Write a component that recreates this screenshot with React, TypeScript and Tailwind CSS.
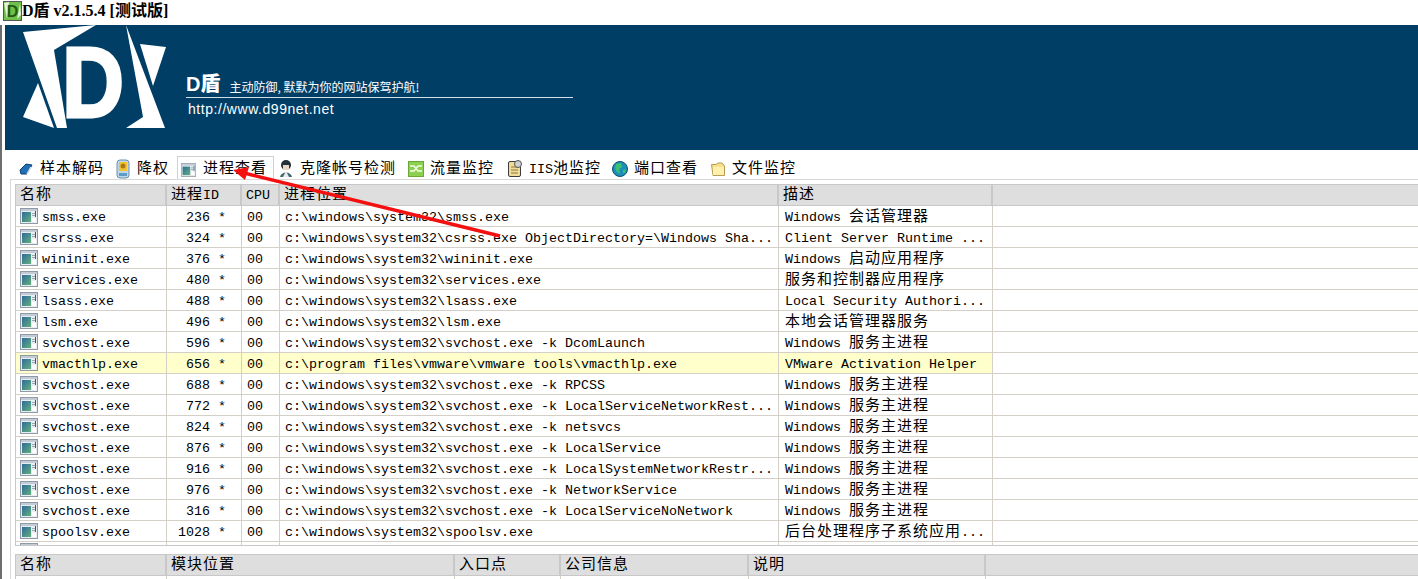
import type { ReactNode } from "react";

type Proc = { name: string; pid: string; path: string; desc: string; hl?: boolean };

const procs: Proc[] = [
  { name: "smss.exe", pid: "236", path: "c:\\windows\\system32\\smss.exe", desc: "Windows 会话管理器" },
  { name: "csrss.exe", pid: "324", path: "c:\\windows\\system32\\csrss.exe ObjectDirectory=\\Windows Sha...", desc: "Client Server Runtime ..." },
  { name: "wininit.exe", pid: "376", path: "c:\\windows\\system32\\wininit.exe", desc: "Windows 启动应用程序" },
  { name: "services.exe", pid: "480", path: "c:\\windows\\system32\\services.exe", desc: "服务和控制器应用程序" },
  { name: "lsass.exe", pid: "488", path: "c:\\windows\\system32\\lsass.exe", desc: "Local Security Authori..." },
  { name: "lsm.exe", pid: "496", path: "c:\\windows\\system32\\lsm.exe", desc: "本地会话管理器服务" },
  { name: "svchost.exe", pid: "596", path: "c:\\windows\\system32\\svchost.exe -k DcomLaunch", desc: "Windows 服务主进程" },
  { name: "vmacthlp.exe", pid: "656", path: "c:\\program files\\vmware\\vmware tools\\vmacthlp.exe", desc: "VMware Activation Helper", hl: true },
  { name: "svchost.exe", pid: "688", path: "c:\\windows\\system32\\svchost.exe -k RPCSS", desc: "Windows 服务主进程" },
  { name: "svchost.exe", pid: "772", path: "c:\\windows\\system32\\svchost.exe -k LocalServiceNetworkRest...", desc: "Windows 服务主进程" },
  { name: "svchost.exe", pid: "824", path: "c:\\windows\\system32\\svchost.exe -k netsvcs", desc: "Windows 服务主进程" },
  { name: "svchost.exe", pid: "876", path: "c:\\windows\\system32\\svchost.exe -k LocalService", desc: "Windows 服务主进程" },
  { name: "svchost.exe", pid: "916", path: "c:\\windows\\system32\\svchost.exe -k LocalSystemNetworkRestr...", desc: "Windows 服务主进程" },
  { name: "svchost.exe", pid: "976", path: "c:\\windows\\system32\\svchost.exe -k NetworkService", desc: "Windows 服务主进程" },
  { name: "svchost.exe", pid: "316", path: "c:\\windows\\system32\\svchost.exe -k LocalServiceNoNetwork", desc: "Windows 服务主进程" },
  { name: "spoolsv.exe", pid: "1028", path: "c:\\windows\\system32\\spoolsv.exe", desc: "后台处理程序子系统应用..." },
];

// latin runs stay 8px wide per char, cjk runs 16px, like the old bitmap font
function Mixed({ text }: { text: string }) {
  const parts = text.split(/([\u4e00-\u9fff]+)/);
  return (
    <span className="whitespace-pre leading-[21px]">
      {parts.map((p, i) =>
        /[\u4e00-\u9fff]/.test(p) ? (
          <span key={i} className="font-['Noto_Sans_CJK_SC',sans-serif] text-[15px] leading-[15px] tracking-[1px]">
            {p}
          </span>
        ) : (
          <span key={i}>{p}</span>
        ),
      )}
    </span>
  );
}

function WinIcon({ className = "" }: { className?: string }) {
  return (
    <svg width="18" height="16" viewBox="0 0 18 16" className={className}>
      <defs>
        <linearGradient id="pane" x1="0" y1="0" x2="1" y2="1">
          <stop offset="0" stopColor="#2f6a9c" />
          <stop offset="1" stopColor="#62b07c" />
        </linearGradient>
      </defs>
      <rect x="0.5" y="0.5" width="17" height="15" fill="#e8edf2" stroke="#8f9aa6" />
      <rect x="1" y="1" width="16" height="2" fill="#c3ccd6" />
      <rect x="2" y="4" width="9" height="10" fill="url(#pane)" />
      <rect x="12" y="5" width="3" height="1" fill="#9aa8b4" />
      <rect x="12" y="7" width="3" height="1" fill="#9aa8b4" />
      <rect x="15" y="3" width="1" height="6" fill="#3a5a78" />
      <rect x="12" y="10" width="4" height="4" fill="#ffffff" />
    </svg>
  );
}

function TabIcon({ kind }: { kind: string }) {
  if (kind === "book")
    return (
      <svg width="16" height="16" viewBox="0 0 16 16">
        <path d="M2 9 L8 3 L14 4 L9 13 L3 13 Z" fill="#1f6fb5" stroke="#0e3f73" />
        <path d="M13 6 L9 13" stroke="#d8e4ee" strokeWidth="1.5" />
      </svg>
    );
  if (kind === "badge")
    return (
      <svg width="16" height="20" viewBox="0 0 16 20">
        <rect x="2" y="1" width="12" height="18" rx="3" fill="#bcd8ec" stroke="#6f8fa8" />
        <rect x="4" y="3" width="8" height="9" fill="#f2c230" />
        <circle cx="8" cy="7" r="2.5" fill="#a8781a" />
        <rect x="4" y="14" width="8" height="3" fill="#5f9bc8" />
      </svg>
    );
  if (kind === "user")
    return (
      <svg width="16" height="20" viewBox="0 0 16 20">
        <circle cx="8" cy="6" r="5" fill="#223038" />
        <rect x="5" y="6" width="6" height="5" fill="#e8d8c8" />
        <path d="M2 18 C3 12 13 12 14 18 Z" fill="#3f6a70" />
        <path d="M5 18 L8 12 L11 18 Z" fill="#e8eef0" />
      </svg>
    );
  if (kind === "flow")
    return (
      <svg width="16" height="16" viewBox="0 0 16 16">
        <rect x="0.5" y="0.5" width="15" height="15" fill="#8cd050" stroke="#6aa838" />
        <path d="M2 5 H6 L10 10 H14 M2 10 H6 L10 5 H14" stroke="#f4fbe6" strokeWidth="1.5" fill="none" />
      </svg>
    );
  if (kind === "gear")
    return (
      <svg width="16" height="20" viewBox="0 0 16 20">
        <rect x="1.5" y="2.5" width="12" height="15" rx="1.5" fill="#f0dc98" stroke="#3c3c3c" />
        <path d="M4 8 H11 M4 11 H11 M4 14 H11" stroke="#8c7a40" />
        <circle cx="11" cy="5" r="3.5" fill="#d0d0d0" stroke="#555" />
      </svg>
    );
  if (kind === "globe")
    return (
      <svg width="16" height="16" viewBox="0 0 16 16">
        <circle cx="8" cy="8" r="7.5" fill="#1c8fb8" stroke="#0c4f74" />
        <path d="M4 3 L9 2 L10 6 L7 8 L8 13 L5 11 L3 7 Z M11 9 L14 8 L13 12 L11 12 Z" fill="#3cc070" />
      </svg>
    );
  return (
    <svg width="16" height="16" viewBox="0 0 16 16">
      <path d="M1.5 3.5 H6 L8 2 H12 L14.5 5 V14.5 H3 Z" fill="#f8e08c" stroke="#b89c50" />
      <path d="M3 6 H14 V14 H3 Z" fill="#fff0b0" />
    </svg>
  );
}

const tabs = [
  { icon: "book", label: "样本解码", w: "w-[97px] pl-[1px]" },
  { icon: "badge", label: "降权", w: "w-[64px] pl-[1px]" },
  { icon: "win", label: "进程查看", w: "w-[97px] pl-[2px]", active: true },
  { icon: "user", label: "克隆帐号检测", w: "w-[132px] pl-[3px]" },
  { icon: "flow", label: "流量监控", w: "w-[99px] pl-[1px]" },
  { icon: "gear", label: "IIS池监控", w: "w-[105px] pl-[1px]" },
  { icon: "globe", label: "端口查看", w: "w-[98px] pl-[1px]" },
  { icon: "folder", label: "文件监控", w: "w-[100px] pl-[1px]" },
];

function Cell({ w, children, className = "" }: { w: string; children?: ReactNode; className?: string }) {
  return (
    <div className={`${w} shrink-0 h-full flex items-center pt-[3px] whitespace-nowrap border-r border-[#d4d0c8] ${className}`}>
      {children}
    </div>
  );
}

function HeadCell({ w, children }: { w: string; children?: ReactNode }) {
  return (
    <div className={`${w} shrink-0 h-full flex items-center pl-[4px] pt-[1px] whitespace-nowrap border-r-2 border-[#c8c8c8]`}>
      <Mixed text={String(children ?? "")} />
    </div>
  );
}

export default function App() {
  return (
    <div className="relative w-[1418px] h-[579px] overflow-hidden bg-white text-[13.33px] text-black font-['Liberation_Mono','Noto_Sans_CJK_SC',monospace]">
      {/* title bar */}
      <div className="h-[25px] flex items-center pl-[3px] font-['Liberation_Serif','Noto_Sans_CJK_SC',serif] text-[16px] font-bold text-black">
        <svg width="19" height="20" viewBox="0 0 19 20" className="mt-[-3px]">
          <rect x="0.5" y="0.5" width="18" height="19" fill="#6fbf4a" stroke="#555" />
          <path d="M1 2 L6 1 L4 18 Z M17 3 L14 18 L18 14 Z" fill="#e4f4d8" />
          <text x="9.5" y="16" textAnchor="middle" fontFamily="'Liberation Sans',sans-serif" fontWeight="700" fontSize="16" fill="#1f5c12">
            D
          </text>
        </svg>
        <span className="mt-[-4px] whitespace-nowrap">D盾 v2.1.5.4 [测试版]</span>
      </div>

      <div className="flex">
        <div className="w-[2px] bg-[#6e6e6e] h-[554px] shrink-0" />
        <div className="ml-[3px] flex-1 min-w-0">
          {/* banner */}
          <div className="h-[125px] bg-[#003e66] flex text-white">
            <svg width="165" height="125" viewBox="5 25 165 125" className="shrink-0">
              <g fill="#ffffff">
                <polygon points="23,32 96,25 54,50 67,128 57,128" />
                <polygon points="38,83 54,128 23,117" />
                <polygon points="126,25 165,128 126,128 143,117" />
                <polygon points="140,44 166,47 153,86" />
                <text
                  x="0"
                  y="0"
                  transform="translate(62 117) scale(0.86 1)"
                  fontFamily="'Liberation Sans',sans-serif"
                  fontWeight="700"
                  fontSize="100"
                  stroke="#ffffff"
                  strokeWidth="3"
                >
                  D
                </text>
              </g>
            </svg>
            <div className="ml-[16px] pt-[46px] w-[387px] shrink-0">
              <div className="flex items-end h-[24px] border-b border-[#cfe0ea] pb-[2px] box-content">
                <span className="font-['Liberation_Sans','Noto_Sans_CJK_SC',sans-serif] font-black text-[20px] leading-[22px]">D盾</span>
                <span className="ml-[9px] font-['Noto_Sans_CJK_SC',sans-serif] text-[12px] leading-[16px]">主动防御, 默默为你的网站保驾护航!</span>
              </div>
              <div className="pl-[2px] mt-[1px] font-['Liberation_Sans',sans-serif] text-[14px] tracking-[0.55px] leading-[20px]">http://www.d99net.net</div>
            </div>
          </div>

          {/* tabs */}
          <div className="h-[30px] pt-[6px] pl-[6px] flex items-stretch border-b border-[#d8d8d8] ml-[5px]">
            {tabs.map((t) => (
              <div
                key={t.label}
                className={`${t.w} shrink-0 flex items-center gap-[6px] pt-[3px] whitespace-nowrap ${
                  t.active ? "bg-white border border-b-0 border-[#d0d0d0]" : ""
                }`}
              >
                <span className="w-[17px] flex justify-center shrink-0">
                  {t.icon === "win" ? <WinIcon className="scale-90" /> : <TabIcon kind={t.icon} />}
                </span>
                <Mixed text={t.label} />
              </div>
            ))}
          </div>

          {/* process list */}
          <div className="ml-[5px] border-l border-[#d8d8d8] pl-[4px] pt-[4px]">
            <div className="flex flex-col border-l border-b border-[#c8c8c8] h-[362px]">
              <div className="h-[22px] shrink-0 flex bg-[#dedede] border-y border-[#c8c8c8]">
                <HeadCell w="w-[151px]">名称</HeadCell>
                <HeadCell w="w-[75px]">进程ID</HeadCell>
                <HeadCell w="w-[38px]">CPU</HeadCell>
                <HeadCell w="w-[499px]">进程位置</HeadCell>
                <HeadCell w="w-[214px]">描述</HeadCell>
              </div>
              {procs.map((p, i) => {
                const bg = p.hl ? "bg-[#ffffcc]" : "";
                return (
                  <div key={i} className="h-[21px] shrink-0 flex border-b border-[#d4d0c8]">
                    <Cell w="w-[151px]" className={`pl-[4px] gap-[4px] ${bg}`}>
                      <WinIcon className="mt-[-4px]" />
                      {p.name}
                    </Cell>
                    <Cell w="w-[75px]" className={`justify-end pr-[15px] ${bg}`}>
                      {p.pid} *
                    </Cell>
                    <Cell w="w-[38px]" className={`pl-[5px] ${bg}`}>
                      00
                    </Cell>
                    <Cell w="w-[499px]" className={`pl-[5px] ${bg}`}>
                      {p.path}
                    </Cell>
                    <Cell w="w-[214px]" className={`pl-[6px] ${bg}`}>
                      <Mixed text={p.desc} />
                    </Cell>
                  </div>
                );
              })}
              {/* next row, cut off by the list bottom */}
              <div className="h-[3px] shrink-0 flex overflow-hidden">
                <div className="w-[151px] shrink-0 pl-[4px] pt-[1px] border-r border-[#d4d0c8]">
                  <WinIcon />
                </div>
                <div className="w-[75px] shrink-0 border-r border-[#d4d0c8]" />
                <div className="w-[38px] shrink-0 border-r border-[#d4d0c8]" />
                <div className="w-[499px] shrink-0 border-r border-[#d4d0c8]" />
                <div className="w-[214px] shrink-0 border-r border-[#d4d0c8]" />
              </div>
            </div>

            {/* module list */}
            <div className="mt-[8px] border-l border-[#c8c8c8]">
              <div className="h-[22px] flex bg-[#dedede] border-y border-[#c8c8c8]">
                <HeadCell w="w-[151px]">名称</HeadCell>
                <HeadCell w="w-[288px]">模块位置</HeadCell>
                <HeadCell w="w-[106px]">入口点</HeadCell>
                <HeadCell w="w-[188px]">公司信息</HeadCell>
                <HeadCell w="w-[237px]">说明</HeadCell>
              </div>
              <div className="h-[4px] flex">
                <Cell w="w-[151px]" />
                <Cell w="w-[288px]" />
                <Cell w="w-[106px]" />
                <Cell w="w-[188px]" />
                <Cell w="w-[237px]" />
              </div>
            </div>
          </div>
        </div>
      </div>

      {/* red annotation arrow */}
      <svg width="1418" height="579" className="absolute inset-0 pointer-events-none">
        <path d="M500 236 L244 173" stroke="#f41010" strokeWidth="3.5" />
        <path d="M233 170 L249 167 L245 180 Z" fill="#f41010" />
      </svg>
    </div>
  );
}
